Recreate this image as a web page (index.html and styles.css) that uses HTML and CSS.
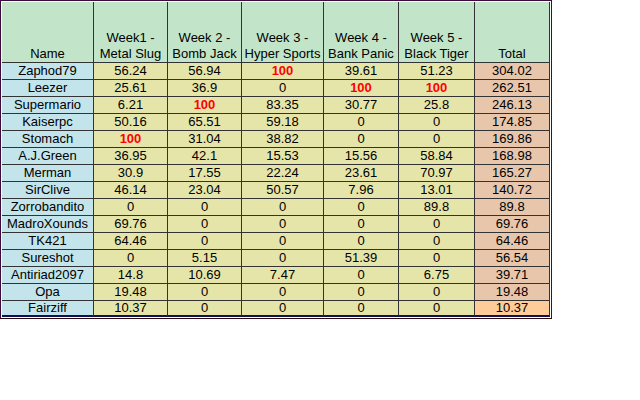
FILE: index.html
```html
<!DOCTYPE html>
<html>
<head>
<meta charset="utf-8">
<link rel="stylesheet" href="styles.css">
</head>
<body>
<div class="sheet">
<table class="grid">
<thead>
<tr>
<th class="c1">Name</th>
<th class="c2">Week1 -<br>Metal Slug</th>
<th class="c3">Week 2 -<br>Bomb Jack</th>
<th class="c4">Week 3 -<br>Hyper Sports</th>
<th class="c5">Week 4 -<br>Bank Panic</th>
<th class="c6">Week 5 -<br>Black Tiger</th>
<th class="c7">Total</th>
</tr>
</thead>
<tbody>
<tr><td class="name">Zaphod79</td><td>56.24</td><td>56.94</td><td class="hi">100</td><td>39.61</td><td>51.23</td><td class="tot">304.02</td></tr>
<tr><td class="name">Leezer</td><td>25.61</td><td>36.9</td><td>0</td><td class="hi">100</td><td class="hi">100</td><td class="tot">262.51</td></tr>
<tr><td class="name">Supermario</td><td>6.21</td><td class="hi">100</td><td>83.35</td><td>30.77</td><td>25.8</td><td class="tot">246.13</td></tr>
<tr><td class="name">Kaiserpc</td><td>50.16</td><td>65.51</td><td>59.18</td><td>0</td><td>0</td><td class="tot">174.85</td></tr>
<tr><td class="name">Stomach</td><td class="hi">100</td><td>31.04</td><td>38.82</td><td>0</td><td>0</td><td class="tot">169.86</td></tr>
<tr><td class="name">A.J.Green</td><td>36.95</td><td>42.1</td><td>15.53</td><td>15.56</td><td>58.84</td><td class="tot">168.98</td></tr>
<tr><td class="name">Merman</td><td>30.9</td><td>17.55</td><td>22.24</td><td>23.61</td><td>70.97</td><td class="tot">165.27</td></tr>
<tr><td class="name">SirClive</td><td>46.14</td><td>23.04</td><td>50.57</td><td>7.96</td><td>13.01</td><td class="tot">140.72</td></tr>
<tr><td class="name">Zorrobandito</td><td>0</td><td>0</td><td>0</td><td>0</td><td>89.8</td><td class="tot">89.8</td></tr>
<tr><td class="name">MadroXounds</td><td>69.76</td><td>0</td><td>0</td><td>0</td><td>0</td><td class="tot">69.76</td></tr>
<tr><td class="name">TK421</td><td>64.46</td><td>0</td><td>0</td><td>0</td><td>0</td><td class="tot">64.46</td></tr>
<tr><td class="name">Sureshot</td><td>0</td><td>5.15</td><td>0</td><td>51.39</td><td>0</td><td class="tot">56.54</td></tr>
<tr><td class="name">Antiriad2097</td><td>14.8</td><td>10.69</td><td>7.47</td><td>0</td><td>6.75</td><td class="tot">39.71</td></tr>
<tr><td class="name">Opa</td><td>19.48</td><td>0</td><td>0</td><td>0</td><td>0</td><td class="tot">19.48</td></tr>
<tr class="last"><td class="name">Fairziff</td><td>10.37</td><td>0</td><td>0</td><td>0</td><td>0</td><td class="tot sel">10.37</td></tr>
</tbody>
</table>
</div>
</body>
</html>
```
FILE: styles.css
```css
html, body {
  margin: 0;
  padding: 0;
  background: #ffffff;
}
.sheet {
  display: inline-block;
  border-top: 1px solid #3c0a3c;
  border-left: 1px solid #3c0a3c;
  border-right: 1px solid #222;
  border-bottom: 1px solid #2a0a0a;
  padding: 1px 1px 1px 1px;
  background: #ffffff;
}
.grid {
  border-collapse: separate;
  border-spacing: 0;
  table-layout: fixed;
  font-family: "Liberation Sans", Arial, sans-serif;
  font-size: 13px;
  line-height: 16px;
  color: #000;
}
.grid th, .grid td {
  padding: 0;
  border-right: 1px solid #333;
  border-bottom: 1px solid #333;
  text-align: center;
  white-space: nowrap;
  overflow: hidden;
}
.grid th {
  font-weight: normal;
  height: 60px;
  vertical-align: bottom;
  background: #c2e5c9;
}
.grid td {
  height: 16px;
  vertical-align: bottom;
  background: #e5e5aa;
}
.c1 { width: 91px; }
.c2 { width: 73px; }
.c3 { width: 73px; }
.c4 { width: 81px; }
.c5 { width: 74px; }
.c6 { width: 75px; }
.c7 { width: 74px; }
.grid td.name { background: #c3e4ea; }
.grid td.tot { background: #e7c6ab; }
.grid td.sel { background: #ffcc99; }
.grid td.hi { color: #ff0000; font-weight: bold; }
.grid tr.last td {
  height: 14px;
  line-height: 14px;
  border-bottom: 2px solid #10105a;
}
```
